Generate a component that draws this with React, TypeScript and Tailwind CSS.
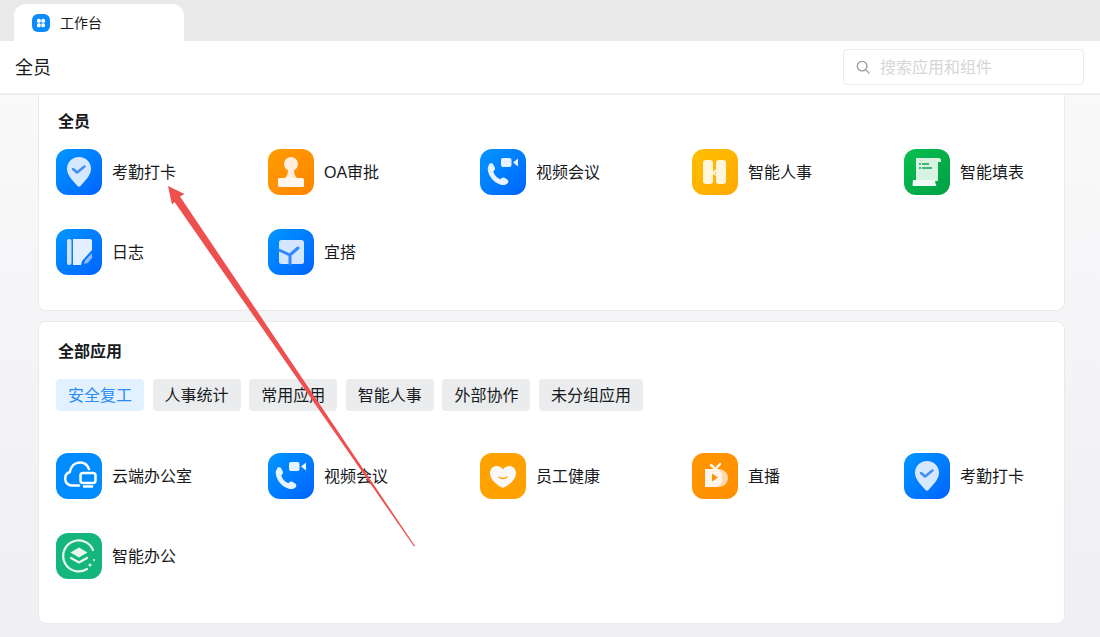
const font = { fontFamily: '"Liberation Sans", "Noto Sans CJK SC", sans-serif' };

function Tile({ from, to, children }: { from: string; to: string; children: React.ReactNode }) {
  return (
    <div className={`size-[46px] shrink-0 rounded-xl bg-gradient-to-br ${from} ${to}`}>
      <svg viewBox="0 0 46 46" className="size-full">{children}</svg>
    </div>
  );
}

const blue = { from: "from-[#0a96ff]", to: "to-[#0062ff]" };

const icons: Record<string, React.ReactNode> = {
  check: (
    <Tile {...blue}>
      <path d="M23 8c7 0 12 5 12 12 0 6-6 12-10.500 17-.9.9-2.100.9-3 0C17 32 11 26 11 20c0-7 5-12 12-12z" fill="#d6e8ff" />
      <path d="M17 20l4 3.500 7.500-6" fill="none" stroke="#3f8ff5" strokeWidth="2.500" strokeLinecap="round" strokeLinejoin="round" />
    </Tile>
  ),
  oa: (
    <Tile from="from-[#ff9c00]" to="to-[#ff8500]">
      <circle cx="23" cy="15" r="7" fill="#ffeede" />
      <path d="M20 20h6c0 4 .5 7 3 9H17c2.500-2 3-5 3-9z" fill="#ffeede" />
      <rect x="10" y="29" width="26" height="9" rx="1.500" fill="#fff6ee" />
    </Tile>
  ),
  video: (
    <Tile {...blue}>
      <path d="M8.500 15.500c1.500-1.700 3.800-1.900 4.800.1l1.500 3c.5 1 .2 2-.6 2.800l-1 1c1 3.500 3.800 6.600 7.200 7.800l1.200-1.100c.8-.7 1.800-.9 2.800-.3l2.800 1.700c1.700 1 1.500 3-.1 4.300-2 1.700-4.300 1.600-7 .6-6-2.200-10.400-7-12-13-.7-2.800-.5-5.200 1.400-6.900z" fill="#e6f2ff" />
      <rect x="21" y="9" width="10.500" height="9" rx="2" fill="#e6f2ff" />
      <path d="M33 13.500l5-4v8z" fill="#e6f2ff" />
    </Tile>
  ),
  hr: (
    <Tile from="from-[#ffc000]" to="to-[#ffa800]">
      <rect x="11" y="11" width="10" height="24" rx="3" fill="#fff6dc" />
      <rect x="24" y="11" width="10" height="24" rx="3" fill="#fff6dc" />
      <path d="M20 23l5-3.500v2.500l-2.500 2 2.500 2v1.500L20 24.500z" fill="#fff6dc" />
    </Tile>
  ),
  form: (
    <Tile from="from-[#0abf50]" to="to-[#00a044]">
      <path d="M12 9h23c1 0 2 1 2 2v2h-3v19H12z" fill="#d8f3e1" />
      <path d="M9 31h22c0 2 .5 4 1.500 6H10c-1 0-1.500-.5-1.500-1.500z" fill="#f1fbf5" />
      <path d="M15 15h2M18 15h7M15 19h2M18 19h10" stroke="#0aa84c" strokeWidth="1.500" />
    </Tile>
  ),
  log: (
    <Tile {...blue}>
      <rect x="11" y="10" width="4.500" height="26" rx="2" fill="#cfe2ff" />
      <path d="M17 10h17c1.100 0 2 .9 2 2v9L26 32l-1 4h-8z" fill="#e3eeff" />
      <path d="M36 24l-7 7.500-1 3.500 3.500-1 4.500-5z" fill="#8fbcff" />
    </Tile>
  ),
  yida: (
    <Tile {...blue}>
      <rect x="11" y="11" width="25" height="24" rx="2.500" fill="#d3e5ff" />
      <path d="M11 21l11 5 8-7M22 26v9" fill="none" stroke="#2f88ff" strokeWidth="3" strokeLinecap="round" />
    </Tile>
  ),
  cloud: (
    <Tile from="from-[#008cff]" to="to-[#008cff]">
      <path d="M23 32.500h-8A7 7 0 0 1 13.800 19C15 13 19 9.500 24 9.500c4.400 0 7.700 2.700 9 6.500" fill="none" stroke="#fff" strokeWidth="2.500" strokeLinecap="round" />
      <rect x="24.500" y="20" width="15" height="10" rx="2.500" fill="none" stroke="#fff" strokeWidth="2.500" />
      <path d="M28 33.500h8" stroke="#fff" strokeWidth="2.500" strokeLinecap="round" />
    </Tile>
  ),
  heart: (
    <Tile from="from-[#ffa200]" to="to-[#ffa200]">
      <path d="M23 35c-6-3-13-8-13-15 0-4 3-7 6.800-7 2.600 0 4.800 1.300 6.200 3.400 1.400-2.100 3.600-3.400 6.200-3.400 3.800 0 6.800 3 6.800 7 0 7-7 12-13 15z" fill="#f9f9f9" />
      <path d="M19 24c2 2 6 2 8 0" fill="none" stroke="#ffa200" strokeWidth="1.300" strokeLinecap="round" />
    </Tile>
  ),
  live: (
    <Tile from="from-[#ff9500]" to="to-[#ff8f00]">
      <path d="M13 16h14a9 9 0 0 1 9 9 9 9 0 0 1-9 9H13z" fill="#ffd9ad" />
      <path d="M13 16h12a9 9 0 0 1 5 9 9 9 0 0 1-5 9H13z" fill="#fff5ea" />
      <path d="M19 12l4.500 4 4.500-5" fill="none" stroke="#fff5ea" strokeWidth="2.500" strokeLinecap="round" strokeLinejoin="round" />
      <path d="M20 20.500l6 4-6 4z" fill="#ff9000" />
    </Tile>
  ),
  smart: (
    <Tile from="from-[#14b67e]" to="to-[#14b67e]">
      <path d="M37 17a15.500 15.500 0 1 0-6 19" fill="none" stroke="#e8f8f1" strokeWidth="2.200" strokeLinecap="round" />
      <path d="M23 14.500l8.500 5-8.500 5-8.500-5z" fill="#e8f8f1" />
      <path d="M15 25l8 4.500 8-4.500" fill="none" stroke="#e8f8f1" strokeWidth="2.200" strokeLinecap="round" strokeLinejoin="round" />
      <circle cx="34" cy="32" r="1.500" fill="#e8f8f1" />
      <circle cx="38" cy="27" r="1" fill="#e8f8f1" />
    </Tile>
  ),
};

function Apps({ items }: { items: [string, string][] }) {
  return (
    <div className="grid grid-cols-[repeat(5,212px)] gap-y-[34px]">
      {items.map(([icon, label], i) => (
        <div key={i} className="flex items-center gap-2.5">
          {icons[icon]}
          <span className="pt-0.5 text-base text-[#171a1d]">{label}</span>
        </div>
      ))}
    </div>
  );
}

const tabs = ["人事统计", "常用应用", "智能人事", "外部协作", "未分组应用"];

export default function App() {
  return (
    <div className="relative h-[637px] w-[1100px] overflow-hidden bg-gradient-to-b from-[#fbfbfb] to-[#efeff4]" style={font}>
      <div className="flex h-[41px] items-end bg-[#e9e9e9] pl-3.5">
        <div className="flex h-[37px] w-[170px] items-center gap-2.5 rounded-t-xl bg-white pl-[18px]">
          <svg viewBox="0 0 18 18" className="size-[18px]">
            <rect width="18" height="18" rx="6" fill="#0a8cff" />
            <rect x="5" y="4.800" width="3.700" height="3.900" rx="1.500" fill="#fff" />
            <rect x="9.300" y="4.800" width="3.700" height="3.900" rx="1.500" fill="#fff" />
            <rect x="5" y="9.300" width="3.700" height="3.900" rx="1.500" fill="#fff" />
            <rect x="9.300" y="9.300" width="3.700" height="3.900" rx="1.500" fill="#fff" />
          </svg>
          <span className="text-sm text-[#171a1d]">工作台</span>
        </div>
      </div>

      <div className="flex h-[54px] items-center justify-between border-b-2 border-[#eeeeee] bg-white pr-4 pl-[15px]">
        <span className="pt-0.5 text-lg text-[#171a1d]">全员</span>
        <div className="flex h-9 w-[241px] items-center gap-2.5 rounded border border-[#eaeaea] pl-3">
          <svg viewBox="0 0 16 16" className="size-3.5 text-[#999999]" fill="none" stroke="currentColor" strokeWidth="1.500">
            <circle cx="7" cy="7" r="5.500" />
            <path d="M11 11l4 4" strokeLinecap="round" />
          </svg>
          <span className="pt-0.5 text-base text-[#d6d6d6]">搜索应用和组件</span>
        </div>
      </div>

      <div className="flex flex-col gap-2.5 pr-[35px] pl-[38px]">
        <section className="h-[216px] overflow-hidden rounded-b-lg border border-t-0 border-[#eaeaea] bg-white px-[17px] pt-[17px]">
          <h2 className="pl-0.5 text-base/5 font-bold text-[#171a1d]">全员</h2>
          <div className="mt-[17px]">
            <Apps
              items={[
                ["check", "考勤打卡"],
                ["oa", "OA审批"],
                ["video", "视频会议"],
                ["hr", "智能人事"],
                ["form", "智能填表"],
                ["log", "日志"],
                ["yida", "宜搭"],
              ]}
            />
          </div>
        </section>

        <section className="h-[303px] overflow-hidden rounded-lg border border-[#eaeaea] bg-white px-[17px] pt-5">
          <h2 className="pl-0.5 text-base/5 font-bold text-[#171a1d]">全部应用</h2>
          <div className="mt-[17px] flex w-[587px] justify-between">
            <span className="flex h-8 items-center rounded bg-[#e1f1ff] px-3 pt-0.5 text-base text-[#2a8cf5]">安全复工</span>
            {tabs.map((t) => (
              <span key={t} className="flex h-8 items-center rounded bg-[#ebecee] px-3 pt-0.5 text-base text-[#171a1d]">
                {t}
              </span>
            ))}
          </div>
          <div className="mt-[42px]">
            <Apps
              items={[
                ["cloud", "云端办公室"],
                ["video", "视频会议"],
                ["heart", "员工健康"],
                ["live", "直播"],
                ["check", "考勤打卡"],
                ["smart", "智能办公"],
              ]}
            />
          </div>
        </section>
      </div>

      <svg viewBox="0 0 1100 637" className="pointer-events-none absolute inset-0 size-full">
        <path d="M168 186L184.500 194L180 196.500L415 546L414 546.500L174.500 202L172 204.500z" fill="#ee4f4f" />
      </svg>
    </div>
  );
}
